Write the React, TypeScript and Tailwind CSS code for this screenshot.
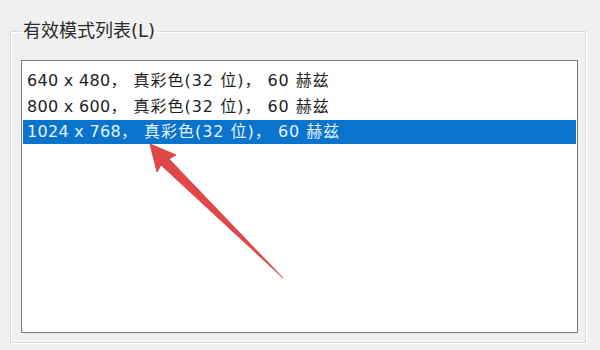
import React from "react";

type Mode = { size: string; color: string; hz: string };

const modes: Mode[] = [
  { size: "640 x 480", color: "真彩色(32 位)", hz: "60 赫兹" },
  { size: "800 x 600", color: "真彩色(32 位)", hz: "60 赫兹" },
  { size: "1024 x 768", color: "真彩色(32 位)", hz: "60 赫兹" },
];

const font = { fontFamily: '"DejaVu Sans", "Noto Sans CJK SC", sans-serif' };

const Row: React.FC<{ mode: Mode }> = ({ mode }) => (
  <>
    <span className="tracking-[0.3px]">{mode.size}</span>
    <span className="mr-[6px]">，</span>
    {mode.color}
    <span className="mr-[6px]">，</span>
    {mode.hz}
  </>
);

const App: React.FC = () => {
  const selected = 2;

  return (
    <div
      className="relative w-[600px] h-[350px] bg-[#f0f0f0] px-[10px] pt-[19px] overflow-hidden"
      style={font}
    >
      <fieldset className="w-[576px] h-[324px] border border-[#d9d9d9] shadow-[inset_1px_1px_0_#ffffff,1px_1px_0_#ffffff] pl-[10px]">
        <legend className="px-[2px] text-[18px] leading-[24px] text-[#2b2b2b]">
          有效模式列表(L)
        </legend>
        <div className="mt-[17px] w-[557px] h-[273px] bg-white border border-[#7a7a7a] pt-[7px] px-[1px]">
          {modes.map((m, i) =>
            i === selected ? (
              <div
                key={m.size}
                className="h-[24px] leading-[24px] bg-[#0a74cc] text-[#e6f2ff] pl-[4px] text-[16px] tracking-[1px] whitespace-nowrap"
              >
                <Row mode={m} />
              </div>
            ) : (
              <div
                key={m.size}
                className="h-[26px] leading-[26px] text-[#1e1e1e] pl-[4px] text-[16px] tracking-[1px] whitespace-nowrap"
              >
                <Row mode={m} />
              </div>
            )
          )}
        </div>
      </fieldset>

      {/* red annotation arrow */}
      <svg
        className="absolute left-0 top-0 pointer-events-none"
        width="600"
        height="350"
        viewBox="0 0 600 350"
      >
        <polygon
          points="150,144 176,155 169,159 283,278 161,165 157,172"
          fill="#e04848"
          stroke="#e04848"
          strokeWidth="1"
          strokeLinejoin="round"
        />
      </svg>
    </div>
  );
};

export default App;
